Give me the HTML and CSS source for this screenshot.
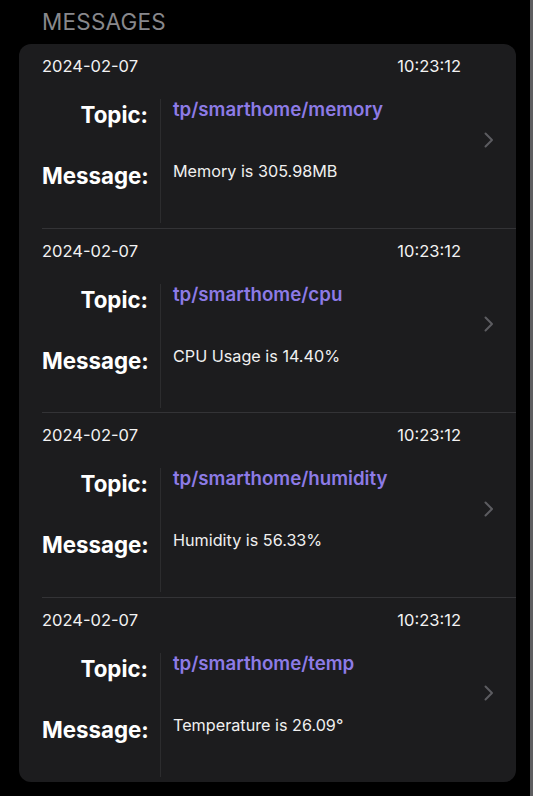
FILE: index.html
```html
<!DOCTYPE html>
<html>
<head>
<meta charset="utf-8">
<link rel="stylesheet" href="styles.css">
</head>
<body>
<div class="page">
  <main class="main">
    <h2 class="section-title">MESSAGES</h2>
    <section class="card">
      <div class="row">
        <div class="content">
          <div class="meta"><span>2024-02-07</span><span>10:23:12</span></div>
          <div class="body">
            <div class="label">Topic:</div>
            <div class="value topic">tp/smarthome/memory</div>
            <div class="label label-msg">Message:</div>
            <div class="value msg">Memory is 305.98MB</div>
          </div>
        </div>
        <div class="chev"><svg width="10" height="16" viewBox="0 0 10 16"><path d="M1.5 1.5 L8 8 L1.5 14.5" fill="none" stroke="#5c5c60" stroke-width="2" stroke-linecap="round" stroke-linejoin="round"/></svg></div>
      </div>
      <div class="row">
        <div class="content">
          <div class="meta"><span>2024-02-07</span><span>10:23:12</span></div>
          <div class="body">
            <div class="label">Topic:</div>
            <div class="value topic">tp/smarthome/cpu</div>
            <div class="label label-msg">Message:</div>
            <div class="value msg">CPU Usage is 14.40%</div>
          </div>
        </div>
        <div class="chev"><svg width="10" height="16" viewBox="0 0 10 16"><path d="M1.5 1.5 L8 8 L1.5 14.5" fill="none" stroke="#5c5c60" stroke-width="2" stroke-linecap="round" stroke-linejoin="round"/></svg></div>
      </div>
      <div class="row">
        <div class="content">
          <div class="meta"><span>2024-02-07</span><span>10:23:12</span></div>
          <div class="body">
            <div class="label">Topic:</div>
            <div class="value topic">tp/smarthome/humidity</div>
            <div class="label label-msg">Message:</div>
            <div class="value msg">Humidity is 56.33%</div>
          </div>
        </div>
        <div class="chev"><svg width="10" height="16" viewBox="0 0 10 16"><path d="M1.5 1.5 L8 8 L1.5 14.5" fill="none" stroke="#5c5c60" stroke-width="2" stroke-linecap="round" stroke-linejoin="round"/></svg></div>
      </div>
      <div class="row">
        <div class="content">
          <div class="meta"><span>2024-02-07</span><span>10:23:12</span></div>
          <div class="body">
            <div class="label">Topic:</div>
            <div class="value topic">tp/smarthome/temp</div>
            <div class="label label-msg">Message:</div>
            <div class="value msg">Temperature is 26.09°</div>
          </div>
        </div>
        <div class="chev"><svg width="10" height="16" viewBox="0 0 10 16"><path d="M1.5 1.5 L8 8 L1.5 14.5" fill="none" stroke="#5c5c60" stroke-width="2" stroke-linecap="round" stroke-linejoin="round"/></svg></div>
      </div>
    </section>
  </main>
  <div class="edge"></div>
</div>
</body>
</html>
```
FILE: styles.css
```css
html, body {
  margin: 0;
  padding: 0;
  background: #000;
  height: 100%;
}
body {
  font-family: Inter, "Noto Sans", sans-serif;
  color: #fff;
}
.page {
  display: flex;
  height: 796px;
  overflow: hidden;
}
.main {
  flex: 1;
  padding: 9px 14px 0 19px;
}
.edge {
  width: 3px;
  background: #5e5e60;
}
.section-title {
  margin: 0 0 9px 23px;
  font-size: 22.5px;
  line-height: 26px;
  font-weight: 400;
  color: #88888c;
  letter-spacing: 0.2px;
}
.card {
  background: #1c1c1e;
  border-radius: 12px;
  padding-bottom: 1px;
}
.row {
  margin-left: 23px;
  display: flex;
  align-items: center;
  border-bottom: 1px solid #333336;
  padding: 12px 0 4.5px;
}
.row:last-child {
  border-bottom: none;
}
.content {
  flex: 1;
}
.meta {
  display: flex;
  justify-content: space-between;
  font-size: 16.5px;
  line-height: 20px;
  color: #f2f2f2;
  margin-bottom: 23px;
}
.body {
  display: grid;
  grid-template-columns: 118px 1fr;
  grid-template-rows: 62px 62px;
}
.label {
  padding-right: 12px;
  text-align: right;
  font-weight: 700;
  font-size: 22.3px;
  line-height: 28px;
  padding-top: 2px;
  white-space: nowrap;
}
.label-msg {
  padding-top: 1px;
}
.value {
  border-left: 1px solid #2c2c2e;
  padding-left: 12px;
  white-space: nowrap;
}
.topic {
  color: #8d7be6;
  font-weight: 600;
  font-size: 18.7px;
  line-height: 22px;
}
.msg {
  font-size: 16.2px;
  line-height: 20px;
  color: #f0f0f0;
}
.chev {
  width: 55px;
  display: flex;
  padding-left: 23px;
  box-sizing: border-box;
}
.chev svg {
  display: block;
}
```
